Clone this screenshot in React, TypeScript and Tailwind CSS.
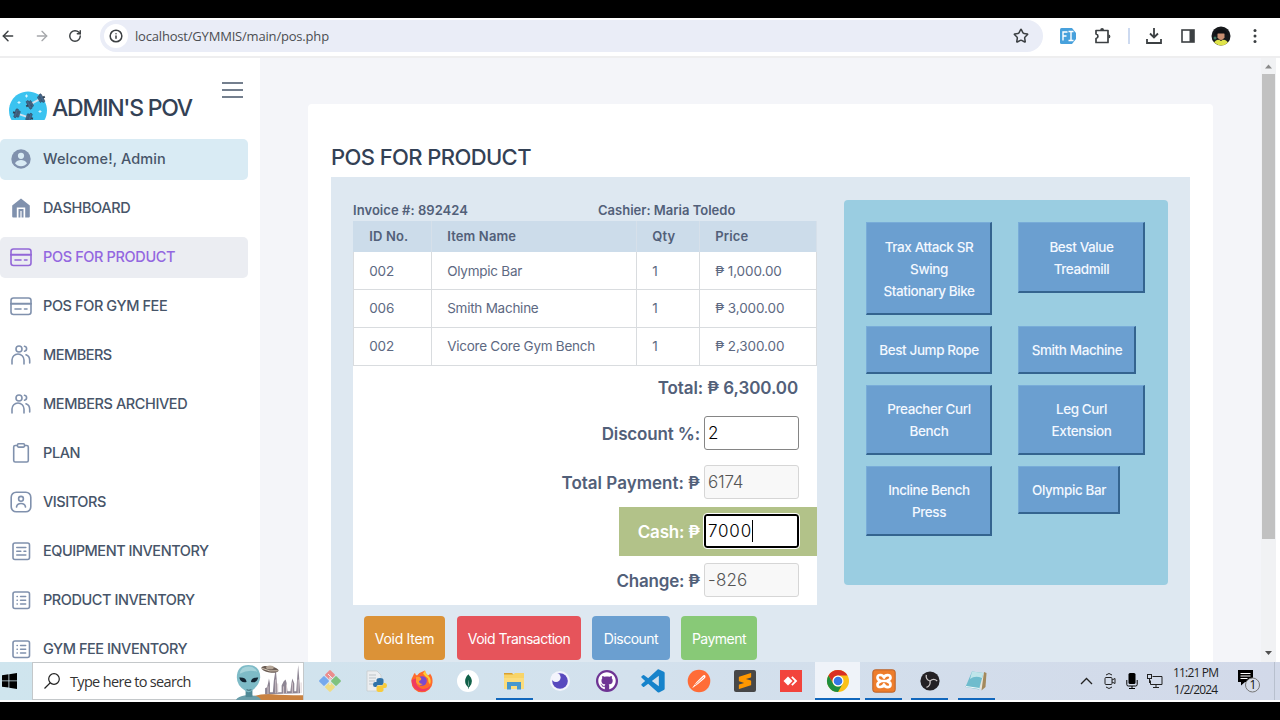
import type { ReactNode } from "react";
import { ArrowLeft, ArrowRight, RotateCw, Info, Star } from "lucide-react";
import { SiMongodb, SiSublimetext } from "react-icons/si";
import { FaGithub } from "react-icons/fa";
import { BiLogoVisualStudio } from "react-icons/bi";

function Stroke({ children }: { children: ReactNode }) {
  return (
    <svg viewBox="0 0 22 22" className="size-[22px]" fill="none" stroke="currentColor" strokeWidth="1.6" strokeLinecap="round" strokeLinejoin="round">
      {children}
    </svg>
  );
}

const UserIcon = () => (
  <svg viewBox="0 0 22 22" className="size-[22px]">
    <circle cx="11" cy="11" r="9.7" fill="#8091ad" />
    <circle cx="11" cy="7.8" r="3.1" fill="#d9ebf4" />
    <path d="M5 15.2c1.4-2.2 3.6-3.1 6-3.1s4.6.9 6 3.1c-1.4 1.9-3.5 3-6 3s-4.6-1.1-6-3Z" fill="#d9ebf4" />
  </svg>
);
const HomeIcon = () => (
  <svg viewBox="0 0 22 22" className="size-[22px]">
    <path d="M2.2 8.500 11 1.500l8.800 7V19.500a1 1 0 0 1-1 1h-3.600V10.500H6.800v10H3.200a1 1 0 0 1-1-1Z" fill="#8091ad" />
    <path d="M8.500 12h5v8.500h-1.900v-6.400h-1.200v6.400H8.500Z" fill="#8091ad" />
  </svg>
);
const CardIcon = () => (
  <Stroke>
    <rect x="1" y="3" width="20" height="16.500" rx="2.500" />
    <path d="M1 8.800h20" strokeWidth="2" />
    <path d="M5 14h6M14.500 14h2.500" />
  </Stroke>
);
const MembersIcon = () => (
  <Stroke>
    <circle cx="9" cy="5" r="3" />
    <path d="M2 20v-4a6 6 0 0 1 12 0v4M14.500 2.300c2.800.600 2.800 4.300 0 4.900M16 10.800c2.600.900 3.700 2.900 3.700 5.700v2.500" />
  </Stroke>
);
const PlanIcon = () => (
  <Stroke>
    <rect x="3.700" y="3.500" width="14.600" height="16.500" rx="1.500" />
    <rect x="7.500" y="1.700" width="7" height="3.400" rx="1" fill="#fff" />
  </Stroke>
);
const VisitorIcon = () => (
  <Stroke>
    <rect x="1.200" y="1.200" width="19.600" height="19.600" rx="5" />
    <circle cx="11" cy="7.800" r="2.400" />
    <path d="M6.500 16c.8-4.600 8.200-4.600 9 0" />
  </Stroke>
);
const EquipmentIcon = () => (
  <Stroke>
    <rect x="3" y="3" width="16.500" height="16.500" rx="2" />
    <path d="M6.800 7.500h9M6.800 11.200h4M14 11.200h1.800M6.800 15h9" />
  </Stroke>
);
const ListIcon = () => (
  <Stroke>
    <rect x="3" y="3" width="16.500" height="16.500" rx="2" />
    <path d="M7 7.500h.4M7 11.200h.4M7 15h.4M10.500 7.500h5.200M10.500 11.200h5.200M10.500 15h5.200" strokeWidth="1.400" />
  </Stroke>
);

const nav = [
  { label: "Welcome!, Admin", icon: <UserIcon />, row: "bg-[#d9ebf4] text-[#475569]", text: "tracking-[0.1px]" },
  { label: "DASHBOARD", icon: <HomeIcon />, row: "text-[#8091ad]", text: "tracking-[-0.35px]" },
  { label: "POS FOR PRODUCT", icon: <CardIcon />, row: "bg-[#ebedf2] text-[#9367d8]", text: "tracking-[-0.37px]" },
  { label: "POS FOR GYM FEE", icon: <CardIcon />, row: "text-[#8091ad]", text: "tracking-[-0.4px]" },
  { label: "MEMBERS", icon: <MembersIcon />, row: "text-[#8091ad]", text: "tracking-[-0.5px]" },
  { label: "MEMBERS ARCHIVED", icon: <MembersIcon />, row: "text-[#8091ad]", text: "tracking-[-0.4px]" },
  { label: "PLAN", icon: <PlanIcon />, row: "text-[#8091ad]", text: "tracking-[-0.4px]" },
  { label: "VISITORS", icon: <VisitorIcon />, row: "text-[#8091ad]", text: "tracking-[-0.45px]" },
  { label: "EQUIPMENT INVENTORY", icon: <EquipmentIcon />, row: "text-[#8091ad]", text: "tracking-[-0.46px]" },
  { label: "PRODUCT INVENTORY", icon: <ListIcon />, row: "text-[#8091ad]", text: "tracking-[-0.44px]" },
  { label: "GYM FEE INVENTORY", icon: <ListIcon />, row: "text-[#8091ad]", text: "tracking-[-0.44px]" },
];

function Dumbbell() {
  return (
    <>
      <path d="M-6 0H6" stroke="#d3e2ee" strokeWidth="2" />
      <rect x="-8.500" y="-4.500" width="2.600" height="9" rx="1" />
      <rect x="-5.500" y="-3.200" width="1.800" height="6.400" rx=".6" />
      <rect x="5.900" y="-4.500" width="2.600" height="9" rx="1" />
      <rect x="3.700" y="-3.200" width="1.800" height="6.400" rx=".6" />
      <path d="M-10.500 0h2M8.500 0h2" stroke="#2f4154" strokeWidth="2" />
    </>
  );
}

function Logo() {
  return (
    <svg viewBox="0 0 38 29" className="h-[29px] w-[38px] shrink-0">
      <path d="M2.500 29A19 19 0 1 1 35.500 29Z" fill="#3bc3f0" />
      <g fill="#45668a" stroke="#2c3f53" strokeWidth=".5">
        <g transform="translate(26.500 10.500) rotate(-28)"><Dumbbell /></g>
        <g transform="translate(14 24.500) rotate(18)"><Dumbbell /></g>
      </g>
      <path d="M10 10v3M8.500 11.500h3M17.500 3.500v3M16 5h3M31 19v3M29.500 20.500h3" stroke="#d8f5ff" strokeWidth="1" />
    </svg>
  );
}

function Sidebar() {
  return (
    <aside className="flex w-[260px] shrink-0 flex-col bg-white">
      <div className="flex h-[80.500px] shrink-0 pl-[9px]">
        <div className="mt-[33px]"><Logo /></div>
        <h1 className="mt-[34px] ml-[5px] w-[160px] text-[23px] leading-[32px] font-medium tracking-[-1.250px] whitespace-nowrap text-[#334155]">ADMIN'S POV</h1>
        <svg viewBox="0 0 21 16" className="mt-[23.500px] ml-[10px] h-4 w-[21px]"><path d="M0 1h21M0 8h21M0 15h21" stroke="#475569" strokeWidth="1.500" /></svg>
      </div>
      <nav className="flex flex-col gap-2">
        {nav.map((n, i) => (
          <div key={n.label} className={`flex h-[41px] w-[248px] shrink-0 items-center gap-[11px] rounded-[5px] pl-[10px] ${n.row}`}>
            {n.icon}
            <span className={`pb-px text-[14.500px] font-medium whitespace-nowrap ${n.text} ${i === 2 ? "text-[#9367e0]" : "text-[#475569]"}`}>{n.label}</span>
          </div>
        ))}
      </nav>
    </aside>
  );
}

function Chrome() {
  return (
    <header className="flex h-10 shrink-0 items-center border-b-2 border-[#eeeeef] bg-white pb-[2px] text-[#3c4043]">
      <ArrowLeft className="size-4" strokeWidth={2.200} />
      <ArrowRight className="ml-[18px] size-4 text-[#a5a7aa]" />
      <RotateCw className="ml-[18px] size-[14px]" strokeWidth={2.500} />
      <div className="ml-[18px] flex h-8 w-[943px] items-center rounded-full bg-[#eaedf7] pl-[4px]">
        <span className="flex size-6 items-center justify-center rounded-full bg-white"><Info className="size-[14px]" strokeWidth={2.600} /></span>
        <span className="ml-[7px] pt-px font-['Open_Sans',sans-serif] text-[13px] tracking-[-0.190px] text-[#4c4e52]">localhost/GYMMIS/main/pos.php</span>
        <Star className="mr-[14px] ml-auto size-4" strokeWidth={2.300} />
      </div>
      <svg viewBox="0 0 16 16" className="ml-[17px] size-4"><path d="M1.500 0H12l4 5v6l-4 5H1.500Q0 16 0 14.500v-13Q0 0 1.500 0Z" fill="#48a1dc" /><path d="M3 12.500V4h4.500M3 8h3.500M8.500 3.500h5M8.500 12.500h5M11 3.500v9" stroke="#fff" strokeWidth="1.400" fill="none" /></svg>
      <svg viewBox="0 0 18 18" className="ml-[18px] size-[18px]" fill="none" stroke="currentColor" strokeWidth="1.700"><path d="M2 3.500h12v4.200V15.500H2v-4c2.600-.500 2.600-4 0-4.500Z" strokeLinejoin="round" /><path d="M6.200 3a1.900 1.900 0 0 1 3.800 0ZM14.500 7.500a1.900 1.900 0 0 1 0 3.800Z" fill="currentColor" stroke="none" /></svg>
      <i className="ml-4 h-4 w-[1.500px] bg-[#cddaf0]" />
      <svg viewBox="0 0 16 16" className="ml-4 size-4" fill="none" stroke="currentColor" strokeWidth="1.800"><path d="M8 0v9M4 5.500 8 9.500l4-4M1 11v4h14v-4" /></svg>
      <svg viewBox="0 0 14 14" className="ml-[19px] size-[14px]"><rect x="1" y="1" width="12" height="12" fill="none" stroke="currentColor" strokeWidth="1.600" /><path d="M8.500 1H13v12H8.500Z" fill="currentColor" /></svg>
      <svg viewBox="0 0 20 20" className="ml-[16px] size-5"><circle cx="10" cy="10" r="9.500" fill="#17191c" /><path d="M6.500 7h7v4.500q-3.500 5-7 0Z" fill="#c98f72" /><path d="M3 16.500Q6 12 10 15q4-3 7 1.500-6.500 6-14 0Z" fill="#dfe34a" /><path d="M3 9q1-5 7-6 6 1 7 6l-4-1.500H7Z" fill="#101114" /><circle cx="4" cy="12" r="1.500" fill="#3c7561" /></svg>
      <svg viewBox="0 0 4 16" className="ml-[22px] h-4 w-1" fill="currentColor"><circle cx="2" cy="2.500" r="1.500" /><circle cx="2" cy="8" r="1.500" /><circle cx="2" cy="13.500" r="1.500" /></svg>
    </header>
  );
}

const items = [
  ["002", "Olympic Bar", "1", "₱ 1,000.00"],
  ["006", "Smith Machine", "1", "₱ 3,000.00"],
  ["002", "Vicore Core Gym Bench", "1", "₱ 2,300.00"],
];
const cols = "grid grid-cols-[78px_205px_63px_1fr]";

function Amount({ label, value, box, row, labelClass }: { label: string; value: string; box: string; row: string; labelClass: string }) {
  return (
    <div className={`flex h-[49px] items-center justify-end self-end pr-[18px] ${row}`}>
      <span className={`mr-1 pt-px text-[17px] leading-6 font-semibold whitespace-nowrap ${labelClass}`}>{label}</span>
      <div className={`flex h-[34px] w-[95px] items-center rounded-[3px] text-[17px] font-light ${box}`}>
        <span className="pt-[2px]">{value}</span>
        {value === "7000" && <i className="h-[22px] w-px bg-black" />}
      </div>
    </div>
  );
}

function Invoice() {
  return (
    <section className="flex w-[464px] flex-col">
      <div className="grid h-[21.300px] shrink-0 grid-cols-[245px_1fr] items-center text-[13px] font-semibold text-[#526079]">
        <span className="tracking-[0.050px]">Invoice #: 892424</span>
        <span>Cashier: Maria Toledo</span>
      </div>
      <div className={`${cols} h-[31.200px] shrink-0 items-stretch bg-[#ccdcea] pl-px text-[13px] font-semibold text-[#526079]`}>
        {["ID No.", "Item Name", "Qty", "Price"].map((h) => (
          <span key={h} className="flex items-center border-r border-[#d6e0ea] pb-px pl-[15.200px] tracking-[0.150px]">{h}</span>
        ))}
      </div>
      {items.map((r) => (
        <div key={r[1]} className={`${cols} h-[37.700px] shrink-0 border-b border-l border-[#d9dcdf] bg-white text-[13.500px] tracking-[-0.1px] text-[#5d6982]`}>
          {r.map((c, i) => (
            <span key={i} className={`flex items-center border-r border-[#d9dcdf] pl-[15.200px] ${i === 1 ? "tracking-[-0.250px]" : ""}`}>{c}</span>
          ))}
        </div>
      ))}
      <div className="flex h-[239.500px] shrink-0 flex-col bg-white">
        <div className="flex h-[43px] items-center justify-end pt-[3px] pr-[19px] text-[17px] font-semibold tracking-[-0.1px] text-[#526079]">Total: ₱ 6,300.00</div>
        <Amount label="Discount %:" value="2" row="" labelClass="text-[#526079] tracking-[-0.150px]" box="border border-[#858585] bg-white pl-[3px] text-black" />
        <Amount label="Total Payment: ₱" value="6174" row="" labelClass="text-[#526079]" box="border border-[#d6d6d6] bg-[#f8f8f8] pl-[3px] text-[#555] tracking-[-0.200px]" />
        <Amount label="Cash: ₱" value="7000" row="w-[198px] bg-[#b2c289]" labelClass="text-white tracking-[-0.200px]" box="border-2 border-black bg-white pl-[2px] text-black outline-1 outline-white tracking-[0.800px]" />
        <Amount label="Change: ₱" value="-826" row="" labelClass="text-[#526079] tracking-[-0.200px]" box="border border-[#d6d6d6] bg-[#f8f8f8] pl-[3px] text-[#555] tracking-[0.200px]" />
      </div>
      <div className="mt-[11px] ml-[11px] flex text-[14px] text-white">
        <button className="h-11 w-[81px] rounded bg-[#db9237]"><span className="tracking-[-0.290px]">Void Item</span></button>
        <button className="ml-[12px] h-11 w-[124px] rounded bg-[#e6545b]"><span className="tracking-[-0.520px]">Void Transaction</span></button>
        <button className="ml-[11px] h-11 w-[78px] rounded bg-[#6b9fd0]"><span className="tracking-[-0.500px]">Discount</span></button>
        <button className="ml-[11px] h-11 w-[76px] rounded bg-[#88c977]"><span className="tracking-[-0.500px]">Payment</span></button>
      </div>
    </section>
  );
}

const products = [
  { lines: ["Trax Attack SR", "Swing", "Stationary Bike"], size: "h-[93px] w-[126px]" },
  { lines: ["Best Value", "Treadmill"], size: "h-[71px] w-[127px]" },
  { lines: ["Best Jump Rope"], size: "h-[48px] w-[126px]" },
  { lines: ["Smith Machine"], size: "h-[48px] w-[118px]" },
  { lines: ["Preacher Curl", "Bench"], size: "h-[70px] w-[126px]" },
  { lines: ["Leg Curl", "Extension"], size: "h-[70px] w-[127px]" },
  { lines: ["Incline Bench", "Press"], size: "h-[70px] w-[126px]" },
  { lines: ["Olympic Bar"], size: "h-[48px] w-[102px]" },
];

function Products() {
  return (
    <section className="grid h-[385px] w-[324px] grid-cols-[126px_127px] content-start items-start gap-x-[26px] gap-y-[11px] rounded bg-[#9acde1] pt-[22px] pl-[22px]">
      {products.map((p) => (
        <button key={p.lines[0]} className={`flex flex-col items-center justify-center border-t border-r-2 border-b-2 border-l border-t-[#78acd8] border-r-[#34648f] border-b-[#34648f] border-l-[#78acd8] bg-[#6b9fd0] pt-px pl-px text-[13.500px] leading-[22px] font-medium tracking-[-0.400px] text-[#f3f8ff] ${p.size}`}>
          {p.lines.map((l) => <span key={l} className="whitespace-nowrap">{l}</span>)}
        </button>
      ))}
    </section>
  );
}

function ScrollBar() {
  return (
    <div className="ml-auto flex w-[15px] shrink-0 flex-col bg-[#f1f2f4]">
      <svg viewBox="0 0 14 16" className="h-4 w-[14px] shrink-0"><path d="m4 10.500 3.500-4 3.500 4Z" fill="#8a8a8a" /></svg>
      <i className="ml-px h-[465px] w-[13px] bg-[#c1c1c1]" />
      <svg viewBox="0 0 14 16" className="mt-auto mb-px h-4 w-[14px] shrink-0"><path d="m4 6 3.500 4L11 6Z" fill="#505050" /></svg>
    </div>
  );
}

const Git = () => (
  <svg viewBox="0 0 24 24" className="size-6"><g transform="rotate(45 12 12)"><rect x="4" y="4" width="7.500" height="7.500" rx="1" fill="#ec8c8c" /><rect x="12.500" y="4" width="7.500" height="7.500" rx="1" fill="#7fc27f" /><rect x="4" y="12.500" width="7.500" height="7.500" rx="1" fill="#76a9ee" /><rect x="12.500" y="12.500" width="7.500" height="7.500" rx="1" fill="#efdc84" /></g><path d="m10 5 5 5M12 8v8" stroke="#e9f0f4" /></svg>
);
const PyFile = () => (
  <svg viewBox="0 0 24 24" className="size-6"><path d="M3 2h10l4 4v16H3Z" fill="#eceef0" stroke="#c6c8ca" strokeWidth=".7" /><path d="M5 6h7M5 9h7M5 12h6M5 15h4" stroke="#b4b9be" strokeWidth=".8" /><g transform="translate(9 9)"><path d="M3.500 4V2Q3.500 0 7 0t3.500 2v3q0 2-2 2h-3q-2 0-2 2H2Q0 9 0 6.500T2 4Z" fill="#3173a8" /><path d="M10.500 10v2q0 2-3.500 2t-3.500-2V9.500q0-2 2-2h3q2 0 2-2.500H12q2 0 2 2.500T12 10Z" fill="#f7cb3c" /></g></svg>
);
const Firefox = () => (
  <svg viewBox="0 0 24 24" className="size-6"><path d="M3 7q1-3 2-3 .500 2 2 2.500Q10 3 15 1.500q0 3 3 5 2-1 2-2 3 4 2.500 9A10.500 10 0 0 1 1.500 13Q1.300 9 3 7Z" fill="#ff6a2b" /><path d="M15 1.500q0 3 3 5 4 4 2 9-2-2-2-6-3-2-5-5Z" fill="#ffcc34" /><path d="M1.500 11q0 10 10 11.500 7 0 9.500-6-5 5-10 3-6-3-5-10Z" fill="#f03a61" /><circle cx="12" cy="12" r="4.800" fill="#7a4ad0" /><path d="M6 8q3-1 5 1 1 2-2 3 0 3 4 3-5 3-7-2Z" fill="#ff9a32" /></svg>
);
const Mongo = () => <span className="flex size-[22px] items-center justify-center rounded-full bg-white"><SiMongodb className="size-[15px] text-[#116149]" /></span>;
const Folder = () => (
  <svg viewBox="0 0 24 24" className="size-6"><path d="M2 4h8l2 2H2Z" fill="#d9a02f" /><path d="M2 5.500h9l2-1.500h9v16H2Z" fill="#f8d468" /><path d="M2 9h20v11H2Z" fill="#fbdc7c" /><path d="M5 20.500V13h14v7.500h-4V17H9v3.500Z" fill="#4597ce" /></svg>
);
const Insomnia = () => (
  <svg viewBox="0 0 24 24" className="size-6"><circle cx="12" cy="12" r="10" fill="#f3f4fc" /><circle cx="12" cy="12" r="7.800" fill="#5849be" /><circle cx="8" cy="8.500" r="4.600" fill="#f3f4fc" /></svg>
);
const Github = () => <span className="flex size-[22px] items-center justify-center rounded-full bg-[#6e3494]"><FaGithub className="size-[18px] text-white" /></span>;
const Sublime = () => <span className="flex size-[22px] items-center justify-center rounded-[2px] bg-[#474747]"><SiSublimetext className="size-4 text-[#ff9800]" /></span>;
const Postman = () => (
  <svg viewBox="0 0 24 24" className="size-6"><circle cx="12" cy="12" r="11.300" fill="#ff6c37" /><path d="m5.500 18.500 4-5.500 6-6q2-2 3 0 .5 1.500-1.500 3l-6 5-5.500 4Z" fill="#fff" /><path d="m8 16 9-8" stroke="#ff6c37" strokeWidth=".7" /></svg>
);
const AnyDesk = () => (
  <svg viewBox="0 0 22 22" className="size-[22px]"><path d="M0 0h22v22H0Z" fill="#f2443c" /><path d="m3.500 11 4.500-4.500 4.500 4.500L8 15.500Z" fill="#fff" /><path d="m11.200 7.500 1.300-1.300 4.800 4.800-4.800 4.800-1.300-1.300 3.500-3.500Z" fill="#fff" /></svg>
);
const ChromeLogo = () => (
  <svg viewBox="0 0 24 24" className="size-6"><circle cx="12" cy="12" r="11" fill="#fbc116" /><path d="M2.470 6.500A11 11 0 0 1 21.530 6.500H12A5.500 5.500 0 0 0 7.240 14.750Z" fill="#d93025" /><path d="M2.470 6.500A11 11 0 0 0 12 23l4.760-8.250A5.500 5.500 0 0 1 7.240 14.750Z" fill="#1e8e3e" /><circle cx="12" cy="12" r="5.500" fill="#fff" /><circle cx="12" cy="12" r="4.300" fill="#3577e5" /></svg>
);
const Xampp = () => (
  <svg viewBox="0 0 24 24" className="ml-px size-6"><rect x=".8" y=".8" width="22.400" height="22.400" rx="2.500" fill="#ee7d2b" stroke="#b8622a" /><path d="M12 8.500C11 5.500 5.500 4.800 5.500 8.500S9 11 9 12s-3.500.300-3.500 3.700S11 18.500 12 15.500c1 3 6.500 3.700 6.500.200S15 13 15 12s3.500-.200 3.500-3.500S13 5.500 12 8.500ZM9.500 12h5" fill="none" stroke="#fff" strokeWidth="2.700" strokeLinejoin="round" /></svg>
);
const Obs = () => (
  <svg viewBox="0 0 20 20" className="size-5"><circle cx="10" cy="10" r="9.600" fill="#232124" /><g fill="none" stroke="#c9c5c5" strokeWidth="1.300"><path d="M10 10Q5.500 8.500 6.300 3.800" /><path d="M10 10Q5.500 8.500 6.300 3.800" transform="rotate(120 10 10)" /><path d="M10 10Q5.500 8.500 6.300 3.800" transform="rotate(240 10 10)" /></g></svg>
);
const Notepad = () => (
  <svg viewBox="0 0 24 24" className="size-6"><path d="m8 3 13 1v14l-4 3Z" fill="#e9e5d9" /><path d="m20 3 2.500 1-1 14-4 3.500Z" fill="#a3895c" /><path d="M8 2.500 19.500 4 15 20.500 1.500 18Z" fill="#6fbccd" /><path d="m8 2.500 11.500 1.500-1.500 5q-7-3-12 1Z" fill="#bfe5ea" /><path d="M2 17.500 15.500 19.500" stroke="#f2f8f9" /></svg>
);

const apps = [
  { id: "git", icon: <Git />, cls: "" },
  { id: "python", icon: <PyFile />, cls: "" },
  { id: "firefox", icon: <Firefox />, cls: "" },
  { id: "mongo", icon: <Mongo />, cls: "" },
  { id: "files", icon: <Folder />, cls: "w-[37px] border-b-2 border-[#1167bc]" },
  { id: "insomnia", icon: <Insomnia />, cls: "" },
  { id: "github", icon: <Github />, cls: "" },
  { id: "code", icon: <BiLogoVisualStudio className="size-[28px] text-[#1683cb]" />, cls: "" },
  { id: "postman", icon: <Postman />, cls: "" },
  { id: "sublime", icon: <Sublime />, cls: "" },
  { id: "anydesk", icon: <AnyDesk />, cls: "" },
  { id: "chrome", icon: <ChromeLogo />, cls: "-mx-1 w-[45px] bg-[#eff3f9] border-b-2 border-[#1167bc]" },
  { id: "xampp", icon: <Xampp />, cls: "w-[37px] border-b-2 border-[#1167bc]" },
  { id: "obs", icon: <Obs />, cls: "w-[37px] border-b-2 border-[#1167bc]" },
  { id: "notepad", icon: <Notepad />, cls: "w-[37px] border-b-2 border-[#1167bc]" },
];

function Alien() {
  return (
    <svg viewBox="0 0 70 38" className="ml-auto h-[37px] w-[70px] shrink-0">
      <path d="M20 38V34q10-3 20-2t32 1v5Z" fill="#c98241" />
      <path d="M2 38q2-4 10-5 3 1 6 0 8 1 10 5Z" fill="#6a9eaa" />
      <path d="M12 26h7v9h-7Z" fill="#508996" />
      <path d="M3 15Q3 2 15 2t12 13q-1 8-8 13-4 4-8 0Q3 23 3 15Z" fill="#7ebbc7" />
      <path d="M6 11Q7 3.500 15 3.500q6 0 9 5.500-9-3-18 2Z" fill="#a6d3da" />
      <path d="M5.500 15q7-.5 7.500 4.500-6 1.500-7.500-4.500ZM25 15q-7-.5-7.500 4.500 6 1.500 7.500-4.500Z" fill="#122432" />
      <path d="M13 27.500q2 1 5 0" stroke="#345d69" fill="none" />
      <path d="M32 32v-6l2-1 1-4 1-5 1 5v9h3l1-12 2-12 1 12 1 12h4v-7l2-4 2-2 1 3 1 9h3l1-8 1-5 2 5v8h2l1-14 1-13 1 13 1 16Z" fill="#8d8593" />
      <path d="M35 24v8M43 17v14M45 21v10M51 24v8M54 22v9M60 20v11M66 17v14M69 20v11" stroke="#d9cdcf" strokeWidth=".9" />
      <ellipse cx="37" cy="6.500" rx="9" ry="3.200" transform="rotate(10 37 6.500)" fill="#6b5d55" /><ellipse cx="37" cy="4.500" rx="4" ry="2" fill="#b3a496" /><path d="M29 5.500q8 4 16 2.500" stroke="#d6c8b8" fill="none" />
    </svg>
  );
}

function Taskbar() {
  return (
    <footer className="flex h-[38px] shrink-0 items-center bg-linear-to-r from-[#cfe5ee] via-[#d3e1ed] to-[#d2d9e9] font-['Open_Sans',sans-serif] text-[#1f1f1f]">
      <svg viewBox="0 0 15 16" className="ml-[2px] h-4 w-[15px]"><path d="M0 2.200 6.500 1.300V7.500H0ZM7.300 1.200 15 0V7.500H7.300ZM0 8.300H6.500v6.300L0 13.700ZM7.300 8.300H15V16l-7.700-1.200Z" fill="#000" /></svg>
      <div className="ml-[15px] flex h-full w-[272px] items-center border border-[#c4c8ca] bg-white pl-[11px]">
        <svg viewBox="0 0 16 16" className="size-4 shrink-0" fill="none" stroke="#222" strokeWidth="1.200"><circle cx="10" cy="6" r="5.300" /><path d="M6.300 9.800.5 15.500" /></svg>
        <span className="ml-[10px] pt-px text-[14.500px] tracking-[-0.670px] whitespace-nowrap text-[#333]">Type here to search</span>
        <Alien />
      </div>
      <div className="ml-[7px] flex h-full gap-[9.200px]">
        {apps.map((a) => (
          <span key={a.id} className={`flex h-full shrink-0 items-center justify-center ${a.cls ? `pt-[2px] ${a.cls}` : "w-[37px]"}`}>{a.icon}</span>
        ))}
      </div>
      <svg viewBox="0 0 13 8" className="ml-[85px] h-2 w-[13px]" fill="none" stroke="#222" strokeWidth="1.300"><path d="m1 7 5.500-5.500L12 7" /></svg>
      <svg viewBox="0 0 12 18" className="ml-[11px] h-[18px] w-3" fill="none" stroke="#222"><rect x="1" y="5.500" width="7" height="7" rx="1" /><path d="m8 8 3-1.500v5L8 10M2 3q3-3 6 0M2 15q3 3 6 0" /></svg>
      <svg viewBox="0 0 12 18" className="ml-[10px] h-[18px] w-3"><rect x="2.500" y="1" width="7" height="11" rx="1.500" fill="#000" /><path d="M.8 8v4.500q0 1.500 1.500 1.500h7.400q1.500 0 1.500-1.500V8M6 14v2.500M3 16.500h6" fill="none" stroke="#000" /></svg>
      <svg viewBox="0 0 16 16" className="ml-[9px] size-4" fill="none" stroke="#222"><path d="M5.500 3.500H15v8H3.500V7.500M9 11.500v2.500M6 14.500h6" /><rect x=".5" y="1.500" width="4" height="4" /><path d="M2.500 6v4" /></svg>
      <div className="ml-[9px] w-[48px] text-center text-[12px] leading-[17px] tracking-[-0.800px] whitespace-nowrap">11:21 PM<br />1/2/2024</div>
      <svg viewBox="0 0 24 24" className="ml-[17px] size-6"><path d="M1 1h15v12H8l-4 3.500V13H1Z" fill="#000" /><path d="M3.500 4.500h10M3.500 7h10M3.500 9.500h7" stroke="#fff" strokeWidth="1" /><circle cx="15.500" cy="16" r="7" fill="#d7dde9" stroke="#777" /><text x="12.500" y="20.200" fontSize="12" fill="#111">1</text></svg>
      <i className="mr-[5px] ml-auto h-full w-px bg-[#b8c0ce]" />
    </footer>
  );
}

export default function App() {
  return (
    <div className="flex h-[720px] w-[1280px] flex-col overflow-hidden border-y-[18px] border-black bg-white font-[Inter,sans-serif]">
      <Chrome />
      <div className="flex h-[604px] w-[1276px] shrink-0 overflow-hidden bg-[#f4f5f9]">
        <Sidebar />
        <main className="mt-[46px] ml-12 w-[905px] shrink-0 rounded-t bg-white px-[23px] pt-[38px]">
          <h2 className="h-[35px] text-[22px] leading-[30px] font-medium tracking-[-0.600px] text-[#334155]">POS FOR PRODUCT</h2>
          <div className="flex h-[500px] w-[859px] gap-[27px] bg-[#dee8f1] pt-[23px] pl-[22px]">
            <Invoice />
            <Products />
          </div>
        </main>
        <ScrollBar />
      </div>
      <Taskbar />
    </div>
  );
}
